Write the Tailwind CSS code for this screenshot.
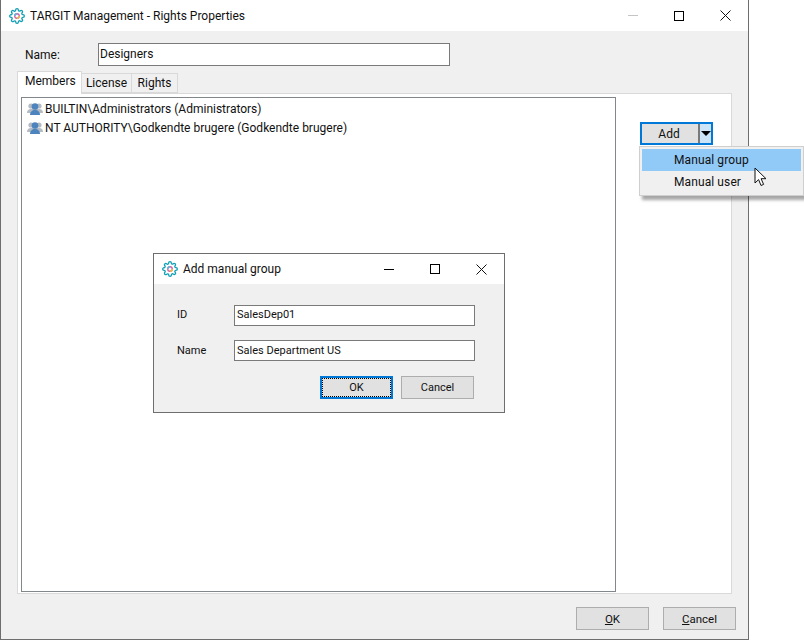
<!DOCTYPE html>
<html lang="en">
  <head>
    <meta charset="UTF-8" />
    <title>TARGIT Management - Rights Properties</title>
    <script src="https://cdn.jsdelivr.net/npm/@tailwindcss/browser@4"></script>
  </head>
  <body class="bg-white">
    <div class="relative w-[804px] h-[640px] overflow-hidden bg-white font-['Roboto',sans-serif] text-[12px] leading-[16px] text-[#111]">
      <!-- Main window -->
      <div class="absolute left-0 top-0 w-[749px] h-[640px] flex flex-col bg-[#f0f0f0] border-l border-r border-b border-[#6e6e6e]">
        <div class="h-[31px] bg-white flex items-center pl-[8px] shrink-0">
          <svg class="w-[16px] h-[16px]" viewBox="0 0 24 24" fill="none">
            <path d="M19.4 15a1.65 1.65 0 0 0 .33 1.82l.06.06a2 2 0 0 1 0 2.83 2 2 0 0 1-2.83 0l-.06-.06a1.65 1.65 0 0 0-1.82-.33 1.65 1.65 0 0 0-1 1.51V21a2 2 0 0 1-2 2 2 2 0 0 1-2-2v-.09A1.65 1.65 0 0 0 9 19.4a1.65 1.65 0 0 0-1.82.33l-.06.06a2 2 0 0 1-2.83 0 2 2 0 0 1 0-2.83l.06-.06a1.65 1.65 0 0 0 .33-1.82 1.65 1.65 0 0 0-1.51-1H3a2 2 0 0 1-2-2 2 2 0 0 1 2-2h.09A1.65 1.65 0 0 0 4.6 9a1.65 1.65 0 0 0-.33-1.82l-.06-.06a2 2 0 0 1 0-2.83 2 2 0 0 1 2.83 0l.06.06a1.65 1.65 0 0 0 1.82.33H9a1.65 1.65 0 0 0 1-1.51V3a2 2 0 0 1 2-2 2 2 0 0 1 2 2v.09a1.65 1.65 0 0 0 1 1.51 1.65 1.65 0 0 0 1.82-.33l.06-.06a2 2 0 0 1 2.83 0 2 2 0 0 1 0 2.83l-.06.06a1.65 1.65 0 0 0-.33 1.82V9a1.65 1.65 0 0 0 1.51 1H21a2 2 0 0 1 2 2 2 2 0 0 1-2 2h-.09a1.65 1.65 0 0 0-1.51 1z" stroke="#12a0b4" stroke-width="2" />
            <circle cx="12" cy="12" r="3.400" stroke="#d65fa6" stroke-width="2" />
            <path d="M15.400 12a3.400 3.400 0 0 1-3.400 3.400" stroke="#e8c13a" stroke-width="2" />
            <path d="M8.600 12a3.400 3.400 0 0 1 3.400-3.400" stroke="#58b8d8" stroke-width="2" />
          </svg>
          <span class="ml-[5px]">TARGIT Management - Rights Properties</span>
          <div class="ml-auto flex items-center">
            <div class="w-[46px] flex justify-center"><div class="w-[10px] h-px bg-[#c4c4c4]"></div></div>
            <div class="w-[46px] flex justify-center"><div class="w-[10px] h-[10px] border border-black"></div></div>
            <div class="w-[46px] flex justify-center">
              <svg class="w-[11px] h-[11px]" viewBox="0 0 11 11" stroke="#111" fill="none"><path d="M.5.5l10 10M10.5.5l-10 10" /></svg>
            </div>
          </div>
        </div>

        <div class="flex items-center h-[23px] mt-[12px] pl-[24px] shrink-0">
          <label class="w-[73px]">Name:</label>
          <div class="w-[352px] h-[23px] bg-white border border-[#7a7a7a] pl-[1px] leading-[21px]">Designers</div>
        </div>

        <div class="flex items-end h-[27px] pl-[16px] shrink-0">
          <div class="relative z-10 h-[23px] w-[65px] mb-[-1px] bg-white border border-b-0 border-[#d9d9d9] pl-[7px] pt-[1px]">Members</div>
          <div class="h-[20px] w-[50px] bg-[#f0f0f0] border border-l-0 border-[#d9d9d9] text-center pt-[1px]">License</div>
          <div class="h-[20px] w-[46px] bg-[#f0f0f0] border border-l-0 border-[#d9d9d9] text-center pt-[1px]">Rights</div>
        </div>

        <div class="relative ml-[16px] w-[715px] h-[501px] bg-white border border-[#d9d9d9] pt-[3px] pl-[3px] shrink-0">
          <ul class="w-[595px] h-[495px] border border-[#82878c] pt-[1px] pl-[5px]">
            <li class="flex items-center h-[19px]">
              <svg class="w-[16px] h-[12px] mr-[2px]" viewBox="0 0 16 12">
                <circle cx="4" cy="3" r="2.600" fill="#b4bbc3" /><circle cx="12" cy="3" r="2.600" fill="#b4bbc3" />
                <path d="M0 10c0-2.500 1.500-4 4-4h8c2.500 0 4 1.500 4 4z" fill="#b4bbc3" />
                <circle cx="8" cy="3.500" r="3.300" fill="#4d84bd" /><path d="M3 12c0-3 2-5 5-5s5 2 5 5z" fill="#4d84bd" />
              </svg>
              BUILTIN\Administrators (Administrators)
            </li>
            <li class="flex items-center h-[19px]">
              <svg class="w-[16px] h-[12px] mr-[2px]" viewBox="0 0 16 12">
                <circle cx="4" cy="3" r="2.600" fill="#b4bbc3" /><circle cx="12" cy="3" r="2.600" fill="#b4bbc3" />
                <path d="M0 10c0-2.500 1.500-4 4-4h8c2.500 0 4 1.500 4 4z" fill="#b4bbc3" />
                <circle cx="8" cy="3.500" r="3.300" fill="#4d84bd" /><path d="M3 12c0-3 2-5 5-5s5 2 5 5z" fill="#4d84bd" />
              </svg>
              NT AUTHORITY\Godkendte brugere (Godkendte brugere)
            </li>
          </ul>

          <div class="absolute left-[622px] top-[28px] flex w-[73px] h-[23px] border-2 border-[#0078d7] bg-[#e1e1e1]">
            <div class="flex-1 flex items-center justify-center border-r-2 border-[#7a7a7a] pr-[2px]">Add</div>
            <div class="w-[11px] bg-[#cce4f7] flex items-center justify-center">
              <div class="w-0 h-0 border-l-[5px] border-r-[5px] border-t-[5px] border-l-transparent border-r-transparent border-t-black"></div>
            </div>
          </div>
        </div>

        <div class="flex justify-end gap-[14px] mt-[13px] pr-[12px] shrink-0 text-[11.5px]">
          <button class="w-[73px] h-[23px] bg-[#e1e1e1] border border-[#adadad]"><u>O</u>K</button>
          <button class="w-[73px] h-[23px] bg-[#e1e1e1] border border-[#adadad]"><u>C</u>ancel</button>
        </div>
      </div>

      <!-- Add dropdown menu -->
      <div class="absolute left-[639px] top-[146px] w-[165px] h-[50px] p-[2px] bg-[#f0f0f0] border border-[#cfcfcf] shadow-[3px_4px_3px_rgba(0,0,0,0.35)] tracking-[0.1px]">
        <div class="h-[22px] bg-[#91c9f7] pl-[32px] leading-[22px]">Manual group</div>
        <div class="h-[22px] pl-[32px] leading-[22px]">Manual user</div>
      </div>
      <svg class="absolute left-[754px] top-[167px] w-[13px] h-[20px]" viewBox="0 0 13 20">
        <path d="M1 1v15l3.600-3.400 2.400 5.900 2.600-1.100-2.500-5.700h4.900z" fill="#fff" stroke="#111" />
      </svg>

      <!-- Add manual group dialog -->
      <div class="absolute left-[153px] top-[253px] w-[352px] h-[160px] flex flex-col bg-[#f0f0f0] border border-[#6e6e6e] text-[11px]">
        <div class="h-[30px] bg-white flex items-center pl-[8px] shrink-0 text-[12px]">
          <svg class="w-[16px] h-[16px]" viewBox="0 0 24 24" fill="none">
            <path d="M19.4 15a1.65 1.65 0 0 0 .33 1.82l.06.06a2 2 0 0 1 0 2.83 2 2 0 0 1-2.83 0l-.06-.06a1.65 1.65 0 0 0-1.82-.33 1.65 1.65 0 0 0-1 1.51V21a2 2 0 0 1-2 2 2 2 0 0 1-2-2v-.09A1.65 1.65 0 0 0 9 19.4a1.65 1.65 0 0 0-1.82.33l-.06.06a2 2 0 0 1-2.83 0 2 2 0 0 1 0-2.83l.06-.06a1.65 1.65 0 0 0 .33-1.82 1.65 1.65 0 0 0-1.51-1H3a2 2 0 0 1-2-2 2 2 0 0 1 2-2h.09A1.65 1.65 0 0 0 4.6 9a1.65 1.65 0 0 0-.33-1.82l-.06-.06a2 2 0 0 1 0-2.83 2 2 0 0 1 2.83 0l.06.06a1.65 1.65 0 0 0 1.82.33H9a1.65 1.65 0 0 0 1-1.51V3a2 2 0 0 1 2-2 2 2 0 0 1 2 2v.09a1.65 1.65 0 0 0 1 1.51 1.65 1.65 0 0 0 1.82-.33l.06-.06a2 2 0 0 1 2.83 0 2 2 0 0 1 0 2.83l-.06.06a1.65 1.65 0 0 0-.33 1.82V9a1.65 1.65 0 0 0 1.51 1H21a2 2 0 0 1 2 2 2 2 0 0 1-2 2h-.09a1.65 1.65 0 0 0-1.51 1z" stroke="#12a0b4" stroke-width="2" />
            <circle cx="12" cy="12" r="3.400" stroke="#d65fa6" stroke-width="2" />
            <path d="M15.400 12a3.400 3.400 0 0 1-3.400 3.400" stroke="#e8c13a" stroke-width="2" />
            <path d="M8.600 12a3.400 3.400 0 0 1 3.400-3.400" stroke="#58b8d8" stroke-width="2" />
          </svg>
          <span class="ml-[5px]">Add manual group</span>
          <div class="ml-auto flex items-center">
            <div class="w-[46px] flex justify-center"><div class="w-[10px] h-px bg-black"></div></div>
            <div class="w-[46px] flex justify-center"><div class="w-[10px] h-[10px] border border-black"></div></div>
            <div class="w-[46px] flex justify-center">
              <svg class="w-[11px] h-[11px]" viewBox="0 0 11 11" stroke="#111" fill="none"><path d="M.5.5l10 10M10.5.5l-10 10" /></svg>
            </div>
          </div>
        </div>
        <div class="flex items-center h-[21px] mt-[21px] pl-[23px]">
          <label class="w-[57px] mt-[-1px]">ID</label>
          <div class="w-[241px] h-[21px] bg-white border border-[#7a7a7a] pl-[2px] leading-[18px]">SalesDep01</div>
        </div>
        <div class="flex items-center h-[21px] mt-[14px] pl-[23px]">
          <label class="w-[57px]">Name</label>
          <div class="w-[241px] h-[21px] bg-white border border-[#7a7a7a] pl-[2px] leading-[19px]">Sales Department US</div>
        </div>
        <div class="flex justify-end gap-[8px] mt-[15px] pr-[30px]">
          <button class="w-[73px] h-[23px] bg-[#e1e1e1] border-2 border-[#0078d7] outline-1 outline-dotted outline-black outline-offset-[-3px]">OK</button>
          <button class="w-[73px] h-[23px] bg-[#e1e1e1] border border-[#adadad]">Cancel</button>
        </div>
      </div>
    </div>
  </body>
</html>
